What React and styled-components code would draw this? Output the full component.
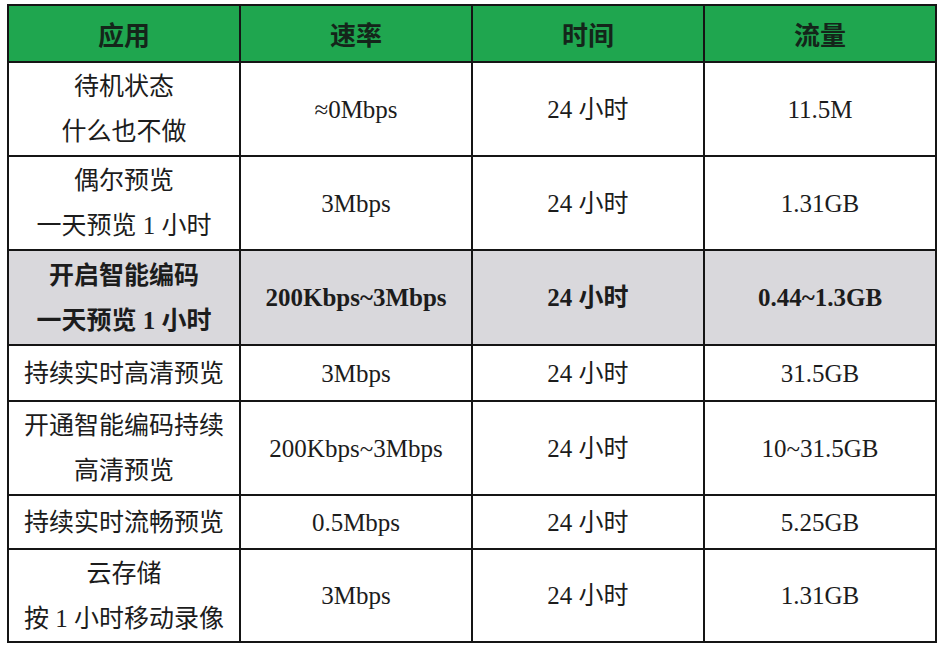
import React from "react";
import styled, { createGlobalStyle } from "styled-components";

const GlobalStyle = createGlobalStyle`
  body {
    margin: 0;
    background: #ffffff;
  }
`;

const Page = styled.div`
  padding: 4px 0 0 7px;
`;

const Table = styled.table`
  width: 930px;
  border-collapse: collapse;
  table-layout: fixed;
  font-family: "Liberation Serif", "Noto Sans CJK SC", serif;
  color: #1c1c1c;
`;

const HeadCell = styled.th`
  height: 55px;
  padding: 0;
  border: 2px solid #151515;
  background: #1fa64f;
  color: #14251a;
  font-family: "Noto Sans CJK SC", sans-serif;
  font-size: 26px;
  font-weight: 700;
  text-align: center;
  vertical-align: middle;
`;

const Row = styled.tr`
  height: ${(p) => p.h}px;
  background: ${(p) => (p.$hl ? "#d9d8dc" : "#ffffff")};
  font-weight: ${(p) => (p.$hl ? 700 : 400)};
`;

const Cell = styled.td`
  padding: 0;
  border: 2px solid #151515;
  font-size: 25px;
  line-height: 45px;
  text-align: center;
  vertical-align: middle;
  white-space: nowrap;
`;

const rows = [
  { h: 94, app: ["待机状态", "什么也不做"], rate: "≈0Mbps", time: "24 小时", flow: "11.5M" },
  { h: 94, app: ["偶尔预览", "一天预览 1 小时"], rate: "3Mbps", time: "24 小时", flow: "1.31GB" },
  { h: 95, app: ["开启智能编码", "一天预览 1 小时"], rate: "200Kbps~3Mbps", time: "24 小时", flow: "0.44~1.3GB", hl: true },
  { h: 56, app: ["持续实时高清预览"], rate: "3Mbps", time: "24 小时", flow: "31.5GB" },
  { h: 94, app: ["开通智能编码持续", "高清预览"], rate: "200Kbps~3Mbps", time: "24 小时", flow: "10~31.5GB" },
  { h: 54, app: ["持续实时流畅预览"], rate: "0.5Mbps", time: "24 小时", flow: "5.25GB" },
  { h: 93, app: ["云存储", "按 1 小时移动录像"], rate: "3Mbps", time: "24 小时", flow: "1.31GB" },
];

export default function App() {
  return (
    <Page>
      <GlobalStyle />
      <Table>
        <thead>
          <tr>
            <HeadCell>应用</HeadCell>
            <HeadCell>速率</HeadCell>
            <HeadCell>时间</HeadCell>
            <HeadCell>流量</HeadCell>
          </tr>
        </thead>
        <tbody>
          {rows.map((r, i) => (
            <Row key={i} h={r.h} $hl={r.hl}>
              <Cell>
                {r.app.map((line, j) => (
                  <div key={j}>{line}</div>
                ))}
              </Cell>
              <Cell>{r.rate}</Cell>
              <Cell>{r.time}</Cell>
              <Cell>{r.flow}</Cell>
            </Row>
          ))}
        </tbody>
      </Table>
    </Page>
  );
}
